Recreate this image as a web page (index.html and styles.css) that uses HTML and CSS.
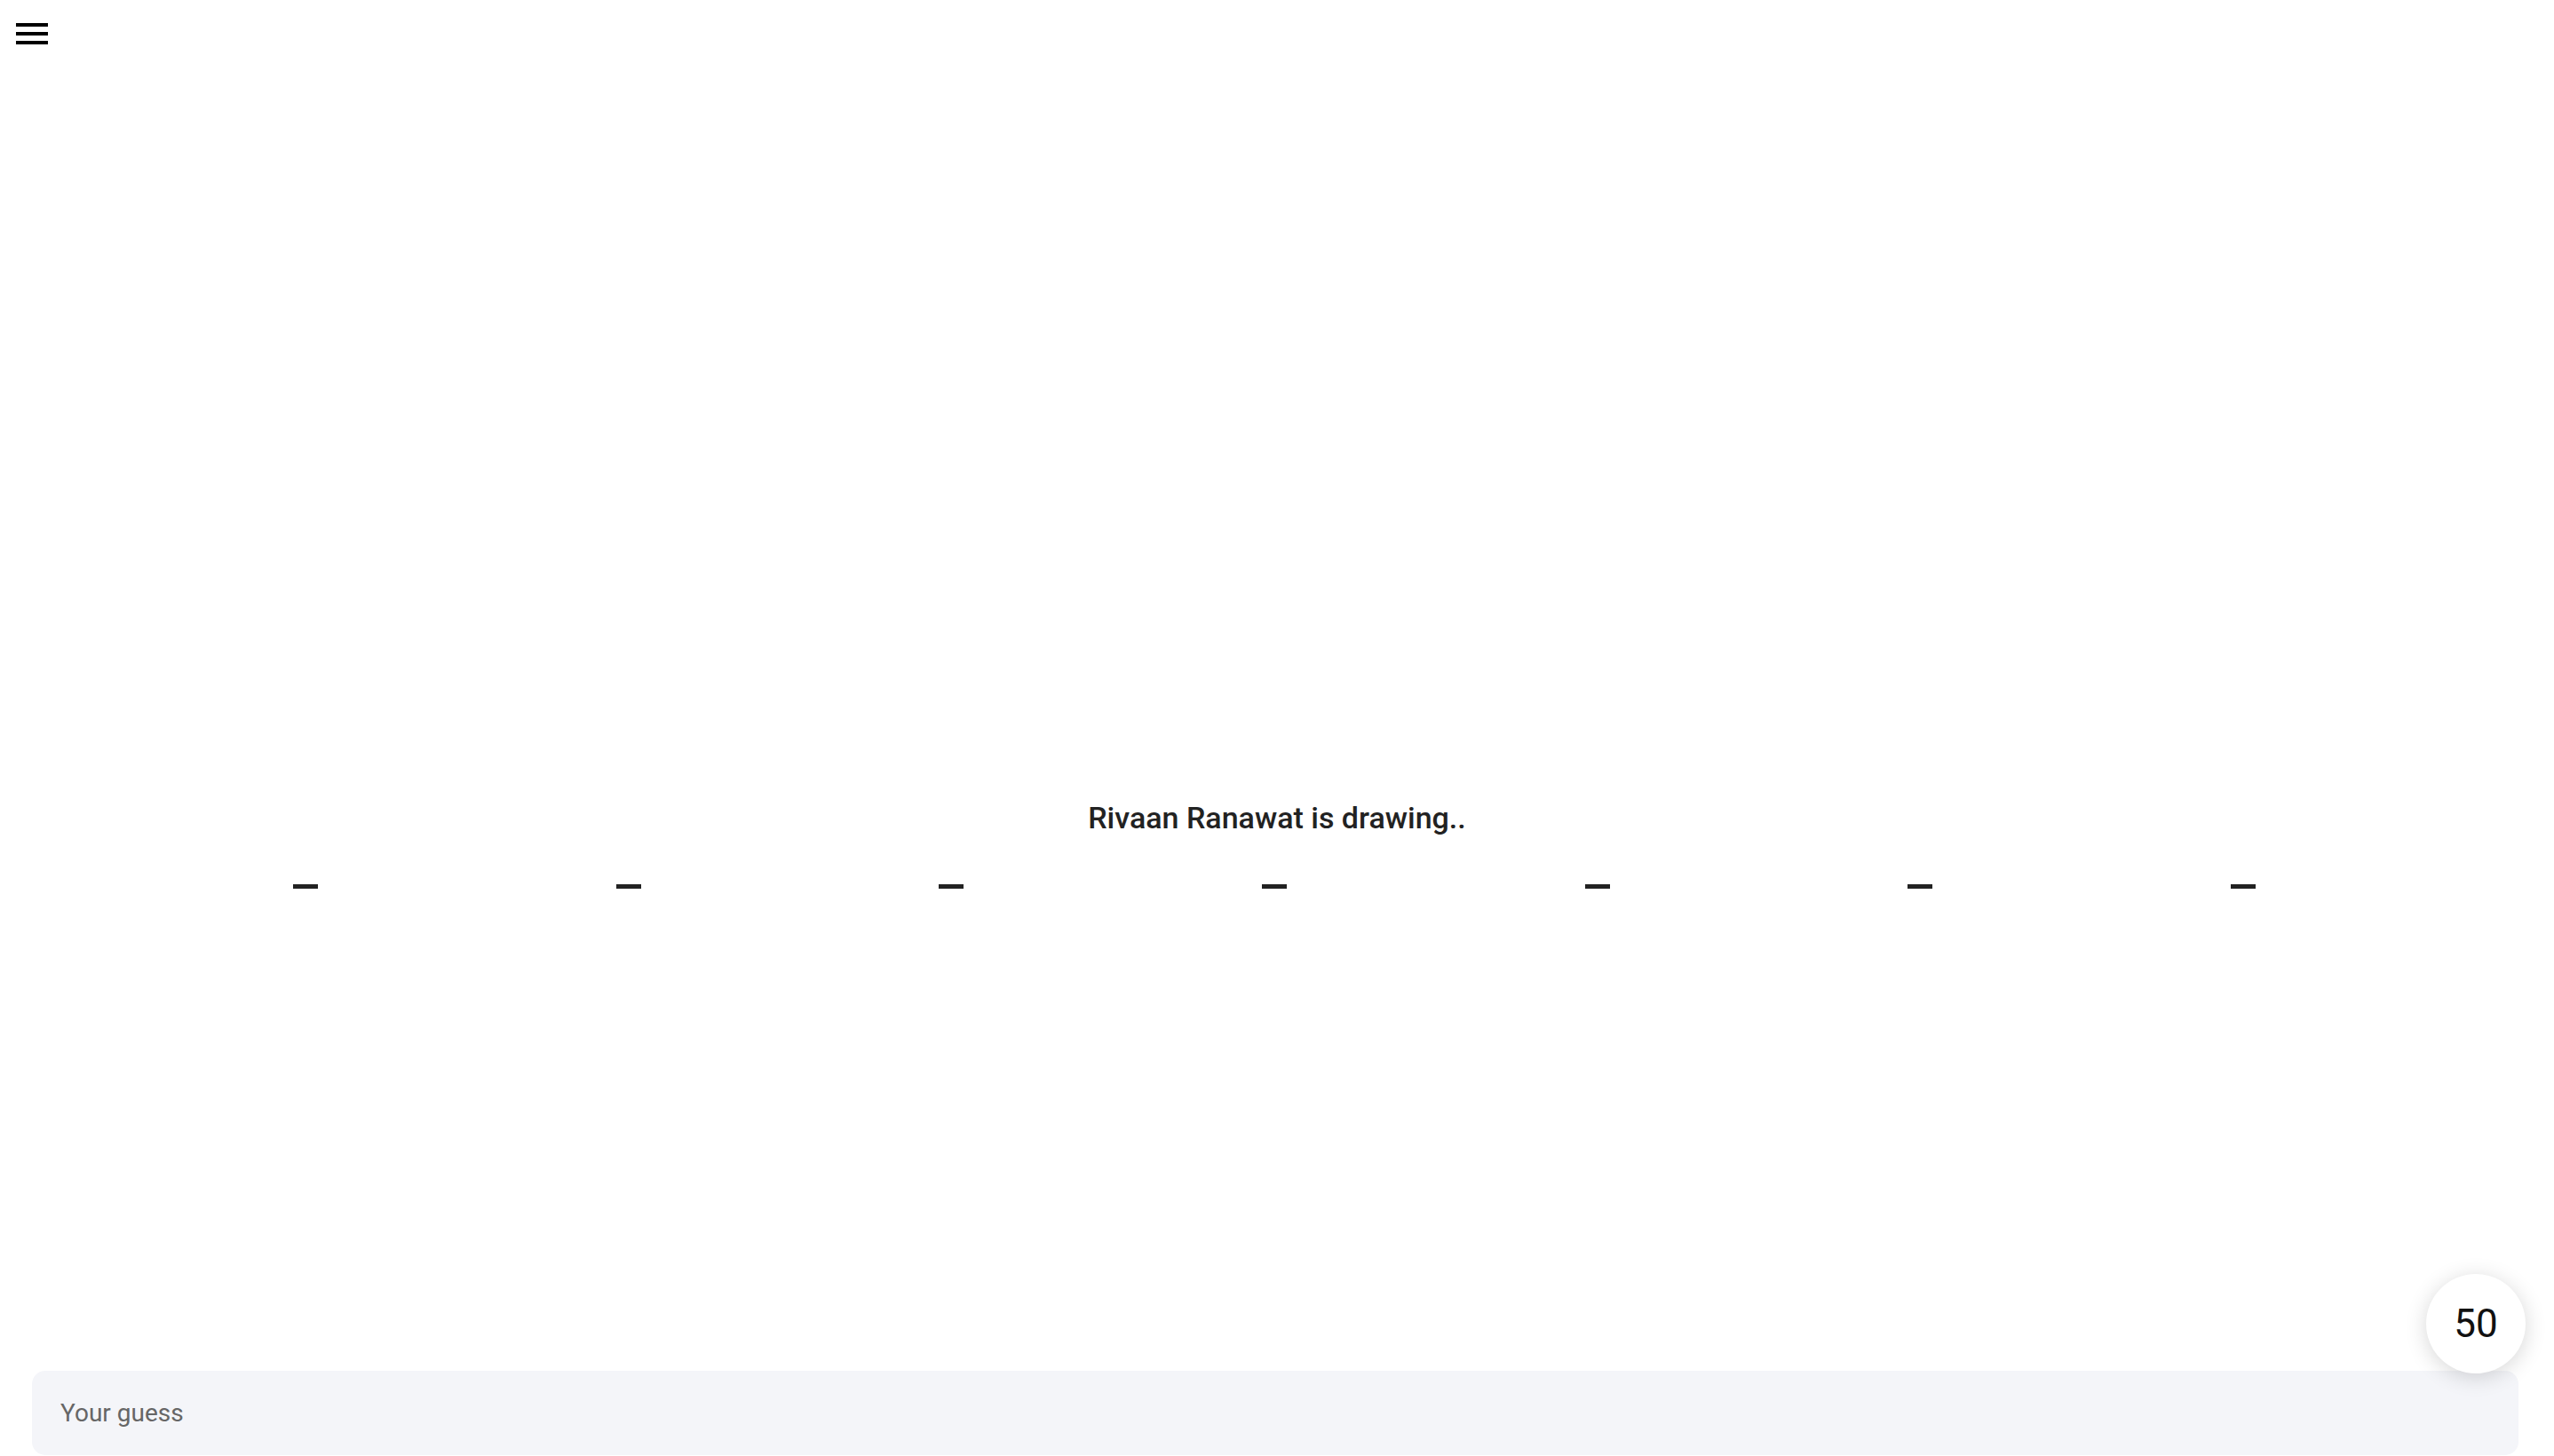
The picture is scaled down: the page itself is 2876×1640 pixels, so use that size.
FILE: index.html
```html
<!DOCTYPE html>
<html lang="en">
<head>
<meta charset="utf-8">
<title>Guess</title>
<link rel="stylesheet" href="styles.css">
</head>
<body>
<div class="app">
  <header class="topbar">
    <button class="menu-btn" aria-label="Menu">
      <svg viewBox="0 0 24 24" width="48" height="48"><path d="M3 18h18v-2H3v2zm0-5h18v-2H3v2zm0-7v2h18V6H3z" fill="#000"/></svg>
    </button>
  </header>
  <div class="board"></div>
  <div class="status">Rivaan Ranawat is drawing..</div>
  <div class="blanks">
    <span class="blank"></span>
    <span class="blank"></span>
    <span class="blank"></span>
    <span class="blank"></span>
    <span class="blank"></span>
    <span class="blank"></span>
    <span class="blank"></span>
  </div>
  <div class="spacer"></div>
  <div class="guess-box">
    <input class="guess-input" type="text" placeholder="Your guess">
  </div>
  <div class="timer">50</div>
</div>
</body>
</html>
```

FILE: styles.css
```css
* { box-sizing: border-box; }
html, body {
  margin: 0;
  padding: 0;
  background: #fff;
  font-family: Roboto, "Noto Sans", sans-serif;
}
.app {
  position: relative;
  height: 1640px;
  display: flex;
  flex-direction: column;
}
.topbar {
  height: 62px;
  padding: 14px 0 0 12px;
}
.menu-btn {
  display: block;
  width: 48px;
  height: 48px;
  padding: 0;
  border: 0;
  background: none;
}
.menu-btn svg { display: block; }
.board {
  height: 839px;
}
.status {
  text-align: center;
  font-size: 34px;
  line-height: 40px;
  font-weight: 500;
  color: #222;
}
.blanks {
  width: 2546px;
  margin: 55px 0 0 calc(50% - 1276px);
  display: flex;
  justify-content: space-around;
}
.blank {
  display: block;
  width: 28px;
  height: 5px;
  background: #222;
}
.spacer { flex: 1; }
.guess-box {
  height: 95px;
  margin: 0 40px 1px 36px;
  background: #f4f5f9;
  border-radius: 15px;
  display: flex;
  align-items: center;
  padding: 0 32px;
}
.guess-input {
  width: 100%;
  border: 0;
  outline: none;
  background: transparent;
  font-family: Roboto, "Noto Sans", sans-serif;
  font-size: 28px;
  color: #222;
  padding: 0;
}
.guess-input::placeholder { color: #666; }
.timer {
  position: absolute;
  right: 32px;
  bottom: 93px;
  width: 112px;
  height: 112px;
  border-radius: 50%;
  background: #fff;
  box-shadow: 0 4px 24px rgba(0,0,0,0.16);
  display: flex;
  align-items: center;
  justify-content: center;
  font-size: 44px;
  color: #111;
}
```
